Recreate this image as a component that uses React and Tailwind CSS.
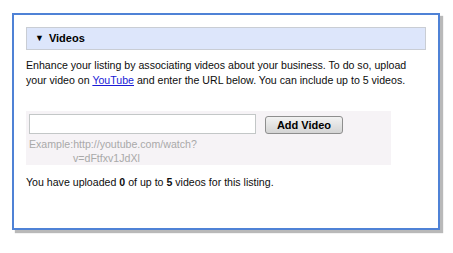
export default function App() {
  return (
    <div className="w-[453px] h-[253px] bg-white pt-[13px] pl-[12px] font-['Liberation_Sans',Arial,sans-serif] text-[10.6px] text-[#0d0d0d]">
      <div className="w-[428px] h-[217px] border-2 border-[#4f82d6] bg-white pt-[12px] px-[12px] shadow-[3px_3px_1px_#b9b9b9]">
        {/* Section header */}
        <div className="h-[23px] flex items-center gap-[5px] pl-[8px] bg-[#dde6fb] border border-[#c9cdd4] font-bold text-[11px] text-[#000]">
          <span className="text-[9px] leading-none">▼</span>
          <span>Videos</span>
        </div>

        <p className="mt-[8px] leading-[15px]">
          Enhance your listing by associating videos about your business. To do so, upload your video on{" "}
          <a href="#" className="text-[#1a1ad6] underline">YouTube</a> and enter the URL below. You can include up to 5 videos.
        </p>

        {/* Add video form */}
        <div className="mt-[23px] w-[365px] h-[54px] bg-[#f6f3f6] pt-[3px] pl-[3px]">
          <div className="flex items-start gap-[9px]">
            <input className="w-[227px] h-[20px] border border-[#c3c7c7] bg-white outline-none" />
            <button className="w-[78px] h-[18px] mt-[2px] rounded-[3px] border border-[#8e8e8e] bg-gradient-to-b from-[#f2f2f2] to-[#d4d4d4] font-bold text-[11px] leading-none text-[#000]">
              Add Video
            </button>
          </div>
          <div className="mt-[3px] text-[#a9a9a9] leading-[14px]">
            <div>Example:http://youtube.com/watch?</div>
            <div className="pl-[44px]">v=dFtfxv1JdXl</div>
          </div>
        </div>

        <p className="mt-[10px] leading-[15px]">
          You have uploaded <b>0</b> of up to <b>5</b> videos for this listing.
        </p>
      </div>
    </div>
  );
}
